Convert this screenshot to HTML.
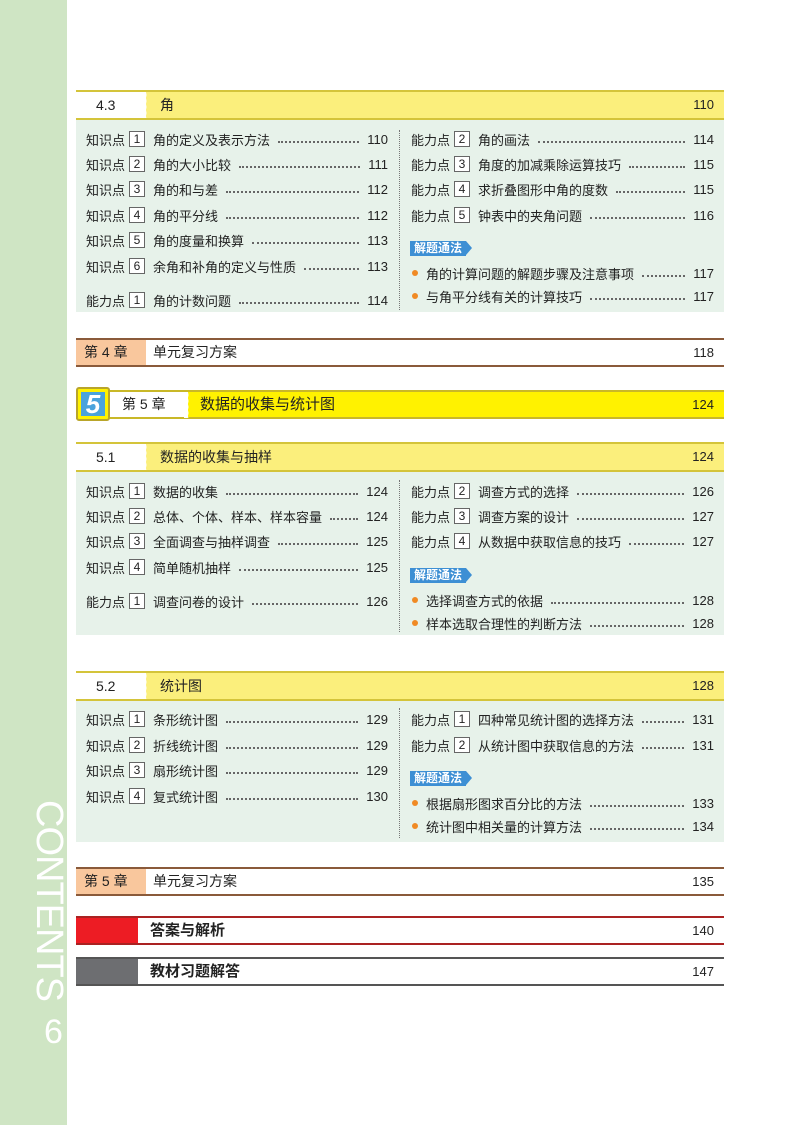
<!DOCTYPE html>
<html><head><meta charset="utf-8"><style>
body{margin:0;width:800px;height:1125px;background:#fff;position:relative;overflow:hidden;font-family:"Liberation Sans","Noto Sans CJK SC",sans-serif;color:#222;}
.side{position:absolute;left:0;top:0;width:67px;height:1125px;background:#cfe5c4;}
.ct{position:absolute;left:70px;top:800px;transform-origin:0 0;transform:rotate(90deg);color:#fff;font-size:38px;letter-spacing:-1px;white-space:nowrap;font-family:"Liberation Sans",sans-serif;}
.six{position:absolute;left:44px;top:1013px;color:#fff;font-size:34px;}
.hd{position:absolute;left:76px;width:648px;height:26px;border-top:2px solid #d4c43a;border-bottom:2px solid #d4c43a;background:#fbef7c;}
.hd .lab{position:absolute;left:0;top:0;width:70px;height:26px;background:#fff;font-size:14px;line-height:26px;text-indent:20px;}
.hd .lab:after{content:"";position:absolute;right:-4px;top:0;width:8px;height:26px;background:radial-gradient(circle at 0 50%,#fff 4px,transparent 5px);background-size:8px 6px;}
.hd .tt{position:absolute;left:84px;top:0;line-height:26px;font-size:14px;}
.hd .pg{position:absolute;right:10px;top:0;line-height:26px;font-size:13px;}
.bd{position:absolute;left:76px;width:648px;background:#e7f2ea;}
.vd{position:absolute;left:399px;border-left:1px dotted #777;}
.r{position:absolute;height:18px;display:flex;align-items:center;font-size:13px;white-space:nowrap;}
.k{margin-right:4px}
.n{display:inline-block;width:14px;height:14px;border:1px solid #666;background:#fff;font-size:12px;line-height:14px;text-align:center;margin-right:8px;}
.d{flex:1;border-bottom:2px dotted #666;margin:0 8px;height:0;position:relative;top:3px;}
.b{display:inline-block;width:6px;height:6px;border-radius:3px;background:#f08a24;margin:0 8px 0 1px;}
.bg{position:absolute;left:410px;height:15px;background:#3d8fd4;color:#fff;font-size:12px;font-weight:bold;line-height:15px;padding:0 4px;}
.bg:after{content:"";position:absolute;right:-6px;top:0;border-left:6px solid #3d8fd4;border-top:7.5px solid transparent;border-bottom:7.5px solid transparent;}
.ch{position:absolute;left:76px;width:648px;height:25px;border-top:2px solid #8a5a3a;border-bottom:2px solid #8a5a3a;background:#fff;font-size:14px;line-height:25px;}
.ch .lab{position:absolute;left:0;top:0;width:70px;height:25px;background:#f9c79d;text-indent:8px;}
.ch .tt{position:absolute;left:77px;top:0;}
.ch .pg{position:absolute;right:10px;top:0;font-size:13px;}
.ex{position:absolute;left:76px;width:648px;height:25px;border-top:2px solid #a22;border-bottom:2px solid #a22;background:#fff;font-size:15px;font-weight:bold;line-height:25px;}
.ex .blk{position:absolute;left:0;top:0;width:62px;height:25px;}
.ex .tt{position:absolute;left:74px;top:0;}
.ex .pg{position:absolute;right:10px;top:0;font-size:13px;font-weight:normal;}
</style></head><body>
<div class="side"></div>
<div class="ct">CONTENTS</div>
<div class="six">6</div>

<!-- 4.3 -->
<div class="hd" style="top:90px"><div class="lab">4.3</div><div class="tt">角</div><div class="pg">110</div></div>
<div class="bd" style="top:120px;height:192px"></div>
<div class="vd" style="top:130px;height:180px"></div>
<div class="r" style="top:130px;left:86px;width:302px"><span class="k">知识点</span><span class="n">1</span>角的定义及表示方法<span class="d"></span>110</div>
<div class="r" style="top:155px;left:86px;width:302px"><span class="k">知识点</span><span class="n">2</span>角的大小比较<span class="d"></span>111</div>
<div class="r" style="top:180px;left:86px;width:302px"><span class="k">知识点</span><span class="n">3</span>角的和与差<span class="d"></span>112</div>
<div class="r" style="top:206px;left:86px;width:302px"><span class="k">知识点</span><span class="n">4</span>角的平分线<span class="d"></span>112</div>
<div class="r" style="top:231px;left:86px;width:302px"><span class="k">知识点</span><span class="n">5</span>角的度量和换算<span class="d"></span>113</div>
<div class="r" style="top:257px;left:86px;width:302px"><span class="k">知识点</span><span class="n">6</span>余角和补角的定义与性质<span class="d"></span>113</div>
<div class="r" style="top:291px;left:86px;width:302px"><span class="k">能力点</span><span class="n">1</span>角的计数问题<span class="d"></span>114</div>
<div class="r" style="top:130px;left:411px;width:303px"><span class="k">能力点</span><span class="n">2</span>角的画法<span class="d"></span>114</div>
<div class="r" style="top:155px;left:411px;width:303px"><span class="k">能力点</span><span class="n">3</span>角度的加减乘除运算技巧<span class="d"></span>115</div>
<div class="r" style="top:180px;left:411px;width:303px"><span class="k">能力点</span><span class="n">4</span>求折叠图形中角的度数<span class="d"></span>115</div>
<div class="r" style="top:206px;left:411px;width:303px"><span class="k">能力点</span><span class="n">5</span>钟表中的夹角问题<span class="d"></span>116</div>
<div class="bg" style="top:241px">解题通法</div>
<div class="r" style="top:264px;left:411px;width:303px"><span class="b"></span>角的计算问题的解题步骤及注意事项<span class="d"></span>117</div>
<div class="r" style="top:287px;left:411px;width:303px"><span class="b"></span>与角平分线有关的计算技巧<span class="d"></span>117</div>

<div class="ch" style="top:338px"><div class="lab">第 4 章</div><div class="tt">单元复习方案</div><div class="pg">118</div></div>

<!-- chapter 5 -->
<div class="hd" style="top:390px;background:#fff200;border-color:#c9b828;height:25px"><div class="lab" style="left:34px;width:78px;height:25px;text-indent:12px;line-height:25px">第 5 章</div><div class="tt" style="left:124px;font-size:15px;line-height:25px">数据的收集与统计图</div><div class="pg" style="line-height:25px">124</div></div>
<div style="position:absolute;left:76px;top:387px;width:30px;height:30px;border:2px solid #b9a52a;border-radius:3px;background:#fff200;"><div style="position:absolute;left:3px;top:3px;width:24px;height:24px;background:#4aa3dc;color:#fff;font-size:26px;font-weight:bold;line-height:24px;text-align:center;font-style:italic">5</div></div>

<!-- 5.1 -->
<div class="hd" style="top:442px"><div class="lab">5.1</div><div class="tt">数据的收集与抽样</div><div class="pg">124</div></div>
<div class="bd" style="top:472px;height:163px"></div>
<div class="vd" style="top:480px;height:152px"></div>
<div class="r" style="top:482px;left:86px;width:302px"><span class="k">知识点</span><span class="n">1</span>数据的收集<span class="d"></span>124</div>
<div class="r" style="top:507px;left:86px;width:302px"><span class="k">知识点</span><span class="n">2</span>总体、个体、样本、样本容量<span class="d"></span>124</div>
<div class="r" style="top:532px;left:86px;width:302px"><span class="k">知识点</span><span class="n">3</span>全面调查与抽样调查<span class="d"></span>125</div>
<div class="r" style="top:558px;left:86px;width:302px"><span class="k">知识点</span><span class="n">4</span>简单随机抽样<span class="d"></span>125</div>
<div class="r" style="top:592px;left:86px;width:302px"><span class="k">能力点</span><span class="n">1</span>调查问卷的设计<span class="d"></span>126</div>
<div class="r" style="top:482px;left:411px;width:303px"><span class="k">能力点</span><span class="n">2</span>调查方式的选择<span class="d"></span>126</div>
<div class="r" style="top:507px;left:411px;width:303px"><span class="k">能力点</span><span class="n">3</span>调查方案的设计<span class="d"></span>127</div>
<div class="r" style="top:532px;left:411px;width:303px"><span class="k">能力点</span><span class="n">4</span>从数据中获取信息的技巧<span class="d"></span>127</div>
<div class="bg" style="top:568px">解题通法</div>
<div class="r" style="top:591px;left:411px;width:303px"><span class="b"></span>选择调查方式的依据<span class="d"></span>128</div>
<div class="r" style="top:614px;left:411px;width:303px"><span class="b"></span>样本选取合理性的判断方法<span class="d"></span>128</div>

<!-- 5.2 -->
<div class="hd" style="top:671px"><div class="lab">5.2</div><div class="tt">统计图</div><div class="pg">128</div></div>
<div class="bd" style="top:701px;height:141px"></div>
<div class="vd" style="top:708px;height:130px"></div>
<div class="r" style="top:710px;left:86px;width:302px"><span class="k">知识点</span><span class="n">1</span>条形统计图<span class="d"></span>129</div>
<div class="r" style="top:736px;left:86px;width:302px"><span class="k">知识点</span><span class="n">2</span>折线统计图<span class="d"></span>129</div>
<div class="r" style="top:761px;left:86px;width:302px"><span class="k">知识点</span><span class="n">3</span>扇形统计图<span class="d"></span>129</div>
<div class="r" style="top:787px;left:86px;width:302px"><span class="k">知识点</span><span class="n">4</span>复式统计图<span class="d"></span>130</div>
<div class="r" style="top:710px;left:411px;width:303px"><span class="k">能力点</span><span class="n">1</span>四种常见统计图的选择方法<span class="d"></span>131</div>
<div class="r" style="top:736px;left:411px;width:303px"><span class="k">能力点</span><span class="n">2</span>从统计图中获取信息的方法<span class="d"></span>131</div>
<div class="bg" style="top:771px">解题通法</div>
<div class="r" style="top:794px;left:411px;width:303px"><span class="b"></span>根据扇形图求百分比的方法<span class="d"></span>133</div>
<div class="r" style="top:817px;left:411px;width:303px"><span class="b"></span>统计图中相关量的计算方法<span class="d"></span>134</div>

<div class="ch" style="top:867px"><div class="lab">第 5 章</div><div class="tt">单元复习方案</div><div class="pg">135</div></div>

<div class="ex" style="top:916px"><div class="blk" style="background:#ed1c24"></div><div class="tt">答案与解析</div><div class="pg">140</div></div>
<div class="ex" style="top:957px;border-color:#555"><div class="blk" style="background:#6d6e71"></div><div class="tt">教材习题解答</div><div class="pg">147</div></div>
</body></html>
